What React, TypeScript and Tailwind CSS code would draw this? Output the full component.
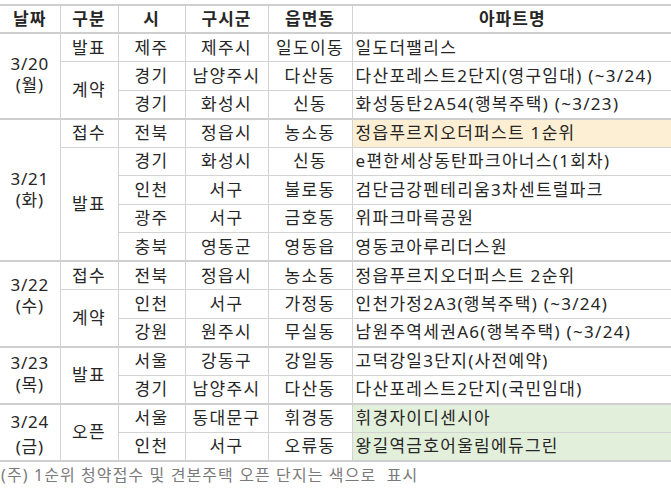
import React from 'react';

type Row = { si: string; gu: string; dong: string; apt: string; tone?: 'orange' | 'green' };
type Cat = { name: string; rows: Row[] };
type Group = { date: string; day: string; shift: string; cats: Cat[] };

const groups: Group[] = [
  {
    date: '3/20',
    day: '(월)',
    shift: 'pb-[4px] leading-[21px]',
    cats: [
      { name: '발표', rows: [{ si: '제주', gu: '제주시', dong: '일도이동', apt: '일도더팰리스' }] },
      {
        name: '계약',
        rows: [
          { si: '경기', gu: '남양주시', dong: '다산동', apt: '다산포레스트2단지(영구임대) (~3/24)' },
          { si: '경기', gu: '화성시', dong: '신동', apt: '화성동탄2A54(행복주택) (~3/23)' }
        ]
      }
    ]
  },
  {
    date: '3/21',
    day: '(화)',
    shift: 'pb-[2px] leading-[21px]',
    cats: [
      {
        name: '접수',
        rows: [{ si: '전북', gu: '정읍시', dong: '농소동', apt: '정읍푸르지오더퍼스트 1순위', tone: 'orange' }]
      },
      {
        name: '발표',
        rows: [
          { si: '경기', gu: '화성시', dong: '신동', apt: 'e편한세상동탄파크아너스(1회차)' },
          { si: '인천', gu: '서구', dong: '불로동', apt: '검단금강펜테리움3차센트럴파크' },
          { si: '광주', gu: '서구', dong: '금호동', apt: '위파크마륵공원' },
          { si: '충북', gu: '영동군', dong: '영동읍', apt: '영동코아루리더스원' }
        ]
      }
    ]
  },
  {
    date: '3/22',
    day: '(수)',
    shift: 'pb-[17px] leading-[21px]',
    cats: [
      { name: '접수', rows: [{ si: '전북', gu: '정읍시', dong: '농소동', apt: '정읍푸르지오더퍼스트 2순위' }] },
      {
        name: '계약',
        rows: [
          { si: '인천', gu: '서구', dong: '가정동', apt: '인천가정2A3(행복주택) (~3/24)' },
          { si: '강원', gu: '원주시', dong: '무실동', apt: '남원주역세권A6(행복주택) (~3/24)' }
        ]
      }
    ]
  },
  {
    date: '3/23',
    day: '(목)',
    shift: 'pb-[2px] leading-[22px]',
    cats: [
      {
        name: '발표',
        rows: [
          { si: '서울', gu: '강동구', dong: '강일동', apt: '고덕강일3단지(사전예약)' },
          { si: '경기', gu: '남양주시', dong: '다산동', apt: '다산포레스트2단지(국민임대)' }
        ]
      }
    ]
  },
  {
    date: '3/24',
    day: '(금)',
    shift: 'pt-[3px] leading-[25px]',
    cats: [
      {
        name: '오픈',
        rows: [
          { si: '서울', gu: '동대문구', dong: '휘경동', apt: '휘경자이디센시아', tone: 'green' },
          { si: '인천', gu: '서구', dong: '오류동', apt: '왕길역금호어울림에듀그린', tone: 'green' }
        ]
      }
    ]
  }
];

const cell = 'border border-[#d3d3d3] text-center align-middle p-0';
const toneBg = { orange: 'bg-[#fcefd3]', green: 'bg-[#e2efda]' };

export default function App() {
  return (
    <div
      className="w-[671px] h-[489px] overflow-hidden bg-white text-[17px] text-[#262626] tracking-[1.3px]"
      style={{ fontFamily: '"Noto Sans", "Noto Sans CJK KR", sans-serif' }}
    >
      <table className="mt-[4px] w-[672px] table-fixed border-collapse">
        <colgroup>
          <col className="w-[60px]" />
          <col className="w-[58px]" />
          <col className="w-[67px]" />
          <col className="w-[83px]" />
          <col className="w-[84px]" />
          <col />
        </colgroup>
        <thead>
          <tr className="h-[28px] border-t-2 border-b-2 border-[#cfcfcf] font-bold tracking-[1px] leading-[20px]">
            <th className={`${cell} border-l-0`}>날짜</th>
            <th className={cell}>구분</th>
            <th className={cell}>시</th>
            <th className={cell}>구시군</th>
            <th className={cell}>읍면동</th>
            <th className={`${cell} border-r-0`}>아파트명</th>
          </tr>
        </thead>
        <tbody>
          {groups.map((g) => {
            const total = g.cats.reduce((n, c) => n + c.rows.length, 0);
            let first = true;
            return g.cats.map((c, ci) =>
              c.rows.map((r, ri) => {
                const showDate = first;
                first = false;
                return (
                  <tr
                    key={`${g.date}-${ci}-${ri}`}
                    className={`h-[28.5px] leading-[20px] ${showDate ? 'border-t-2 border-[#cfcfcf]' : ''}`}
                  >
                    {showDate && (
                      <td rowSpan={total} className={`${cell} border-l-0 tracking-[0.8px]`}>
                        <div className={g.shift}>
                          <div>{g.date}</div>
                          <div>{g.day}</div>
                        </div>
                      </td>
                    )}
                    {ri === 0 && (
                      <td rowSpan={c.rows.length} className={cell}>
                        {c.name}
                      </td>
                    )}
                    <td className={cell}>{r.si}</td>
                    <td className={cell}>{r.gu}</td>
                    <td className={cell}>{r.dong}</td>
                    <td
                      className={`${cell} border-r-0 pl-[3px] text-left whitespace-nowrap ${
                        r.tone ? toneBg[r.tone] : ''
                      }`}
                    >
                      {r.apt}
                    </td>
                  </tr>
                );
              })
            );
          })}
        </tbody>
        <tfoot>
          <tr className="border-t-2 border-[#cfcfcf]">
            <td colSpan={6} className="p-0" />
          </tr>
        </tfoot>
      </table>
      <div className="mt-[3px] pl-[1px] text-[16px] leading-[20px] tracking-[1.1px] text-[#7a7a7a] whitespace-pre">
        (주) 1순위 청약접수 및 견본주택 오픈 단지는 색으로  표시
      </div>
    </div>
  );
}
